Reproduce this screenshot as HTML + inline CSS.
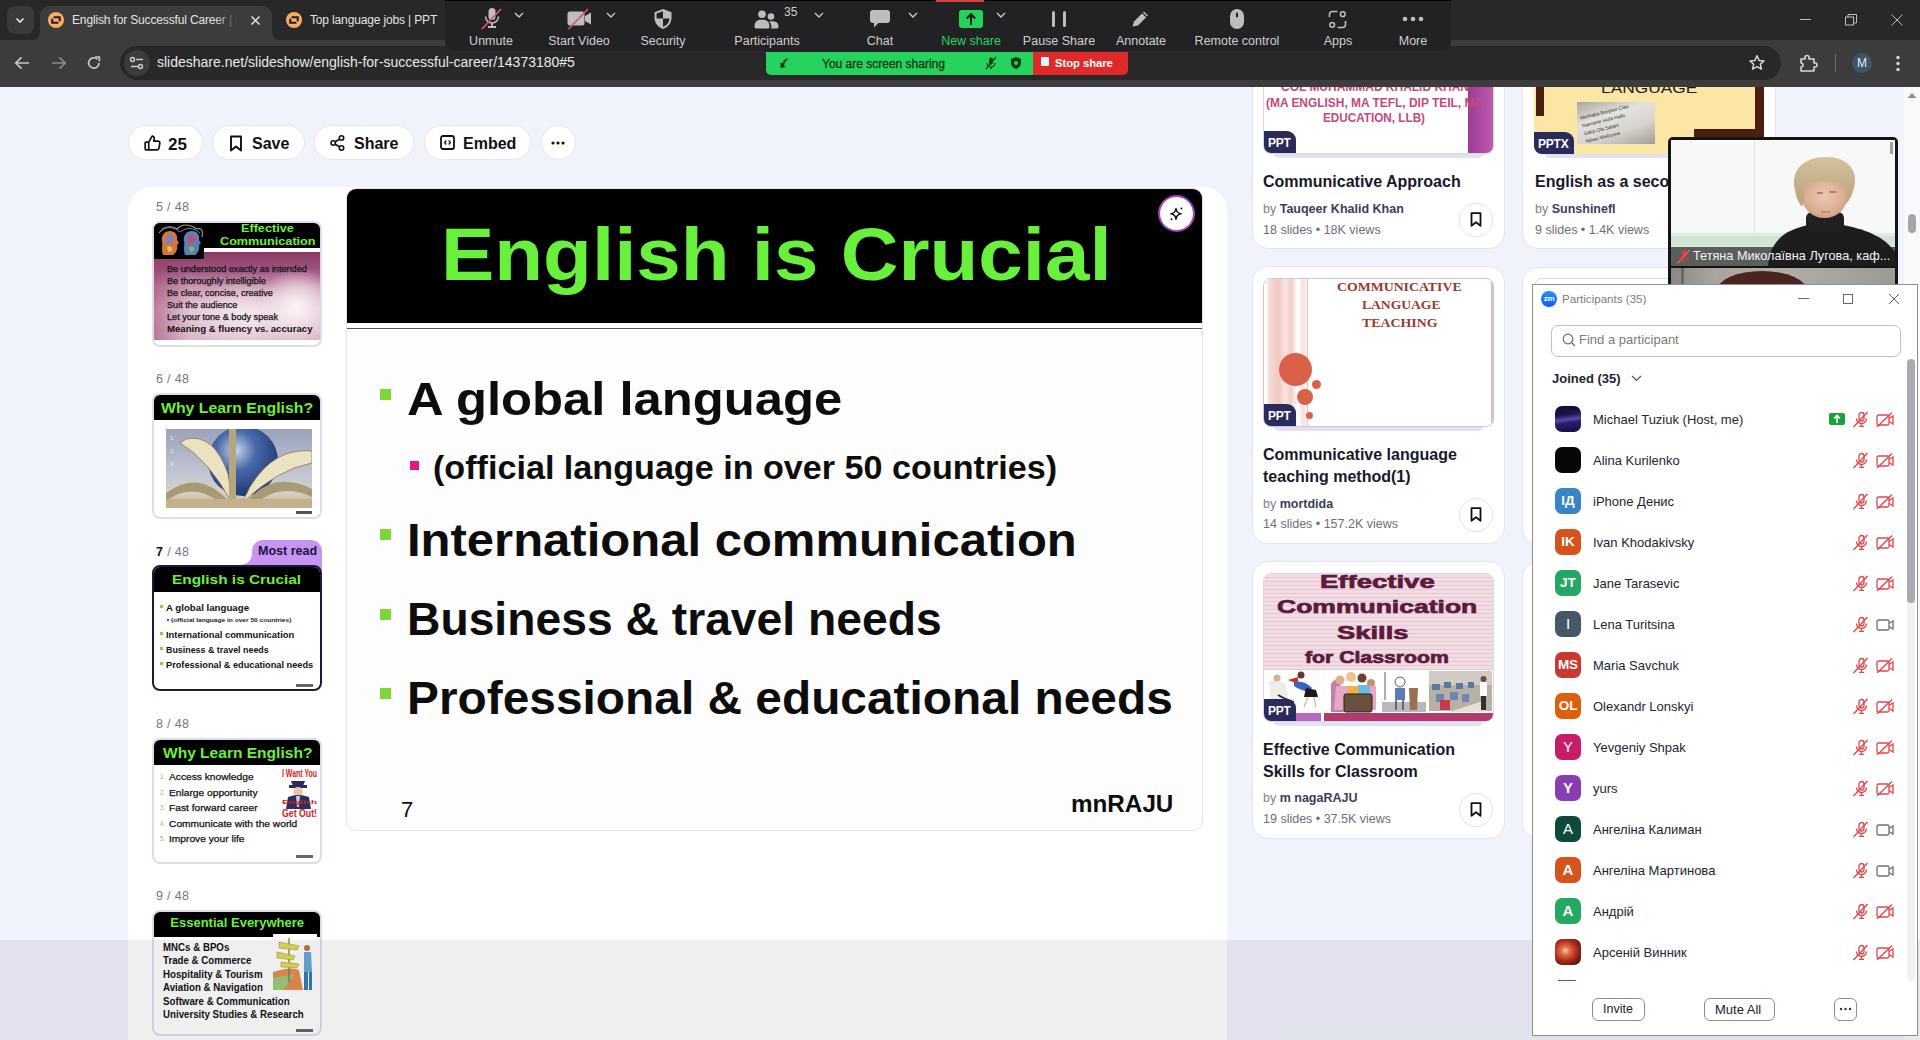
<!DOCTYPE html>
<html><head><meta charset="utf-8">
<style>
*{box-sizing:border-box;margin:0;padding:0}
html,body{width:1920px;height:1040px;overflow:hidden}
body{position:relative;background:#f0f2fc;font-family:"Liberation Sans",sans-serif;color:#111}
.a{position:absolute}
.nw{white-space:nowrap}
svg{display:block}
/* chrome */
#tabstrip{left:0;top:0;width:1920px;height:40px;background:#282828}
#toolbar{left:0;top:40px;width:1920px;height:47px;background:#3c3c3c}
.tab{color:#e3e3e3;font-size:12px;letter-spacing:-0.15px}
/* page */
.pill{top:125px;height:35px;background:#fff;border:1px solid #e6e6ee;border-radius:18px}
.pill span{position:absolute;font-weight:bold;font-size:17px;color:#111;top:7px}
.sl{position:absolute;font-weight:bold;color:#0d0d0d;white-space:nowrap;transform-origin:0 0}
.lbl{font-size:12px;color:#6e6e7e}
.thumb{position:absolute;left:152px;width:170px;height:126px;border:2px solid #dcdcec;border-radius:8px;overflow:hidden;background:#fff}
.card{position:absolute;background:#fff;border:1px solid #e4e5f0;border-radius:16px}
.cthumb{position:absolute;border:1px solid #d8d8e4;border-radius:8px;overflow:hidden;background:#fff}
.badge{position:absolute;left:-1px;bottom:-1px;height:23px;background:#2a2a5c;color:#fff;font-weight:bold;font-size:12px;padding:5px 5px 0 5px;border-top-right-radius:9px;letter-spacing:-0.2px}
.ctitle{position:absolute;font-size:16px;font-weight:bold;color:#18182a;white-space:nowrap;line-height:22px}
.cby{position:absolute;font-size:13px;color:#80808e;white-space:nowrap}
.cby b{color:#3c3c5a}
.cstat{position:absolute;font-size:13px;color:#6e6e7a;white-space:nowrap}
.bm{position:absolute;width:34px;height:34px;border:1px solid #e2e2ec;border-radius:50%;background:#fff}
/* zoom toolbar */
#ztb{left:445px;top:0;width:1006px;height:51px;background:#222224;border-bottom-left-radius:9px;border-bottom-right-radius:9px;border-top:1px solid #000}
.zl{position:absolute;top:34px;font-size:12.5px;color:#cfcfcf;white-space:nowrap;transform:translateX(-50%)}
.zi{position:absolute}
/* participants */
#pw{left:1532px;top:284px;width:386px;height:752px;background:#fff;border:1px solid #8c8c8c}
.prow{position:absolute;left:22px;width:340px;height:41px}
.av{position:absolute;left:0;top:3px;width:26px;height:26px;border-radius:7px;color:#fff;font-weight:bold;font-size:14px;text-align:center;line-height:26px}
.pn{position:absolute;left:39px;top:7px;font-size:13.5px;color:#232333;white-space:nowrap}
</style></head><body>

<!-- action pills -->
<div class="a pill" style="left:128px;width:75px"></div>
<svg class="a" style="left:144px;top:135px" width="17" height="16" viewBox="0 0 18 17"><path d="M5 7.5 V15.8 H2.2 A1 1 0 0 1 1.2 14.8 V8.5 A1 1 0 0 1 2.2 7.5 Z M5 7.5 L8.6 1.2 C10.2 1.2 11 2.3 10.8 3.8 L10.3 6.5 H15 A1.8 1.8 0 0 1 16.8 8.6 L15.8 14.3 A1.8 1.8 0 0 1 14 15.8 H5" fill="none" stroke="#111" stroke-width="1.8" stroke-linejoin="round"/></svg>
<div class="a nw" style="left:168px;top:134.5px;font-size:17px;font-weight:bold;color:#111">25</div>
<div class="a pill" style="left:212px;width:93px"></div>
<svg class="a" style="left:229px;top:135px" width="14" height="17" viewBox="0 0 14 17"><path d="M2 1.5 H12 V15.5 L7 11.5 L2 15.5 Z" fill="none" stroke="#111" stroke-width="1.9" stroke-linejoin="round"/></svg>
<div class="a nw" style="left:252px;top:135px;font-size:16px;font-weight:bold;color:#111">Save</div>
<div class="a pill" style="left:314px;width:100px"></div>
<svg class="a" style="left:330px;top:135px" width="15" height="16" viewBox="0 0 15 16"><circle cx="11.5" cy="3" r="2.2" fill="none" stroke="#111" stroke-width="1.6"/><circle cx="3.2" cy="8" r="2.2" fill="none" stroke="#111" stroke-width="1.6"/><circle cx="11.5" cy="13" r="2.2" fill="none" stroke="#111" stroke-width="1.6"/><path d="M5.2 6.8 L9.5 4.2 M5.2 9.2 L9.5 11.8" stroke="#111" stroke-width="1.6"/></svg>
<div class="a nw" style="left:354px;top:135px;font-size:16px;font-weight:bold;color:#111">Share</div>
<div class="a pill" style="left:424px;width:107px"></div>
<svg class="a" style="left:440px;top:135px" width="15" height="15" viewBox="0 0 15 15"><rect x="1" y="1" width="13" height="13" rx="2" fill="none" stroke="#111" stroke-width="1.8"/><path d="M6.3 5.5 L4.6 7.5 L6.3 9.5 M8.7 5.5 L10.4 7.5 L8.7 9.5" fill="none" stroke="#111" stroke-width="1.3"/></svg>
<div class="a nw" style="left:463px;top:135px;font-size:16px;font-weight:bold;color:#111">Embed</div>
<div class="a pill" style="left:541px;width:35px"></div>
<svg class="a" style="left:551px;top:141px" width="14" height="4" viewBox="0 0 14 4"><circle cx="2" cy="2" r="1.6" fill="#111"/><circle cx="7" cy="2" r="1.6" fill="#111"/><circle cx="12" cy="2" r="1.6" fill="#111"/></svg>

<!-- main white card -->
<div class="a" style="left:128px;top:187px;width:1099px;height:900px;background:#fff;border-radius:24px"></div>


<!-- ===== thumbnails ===== -->
<div class="a nw" style="left:156px;top:200px;font-size:12.5px;color:#757585;letter-spacing:0.35px">5 / 48</div>
<div class="thumb" style="top:221px">
<div class="a" style="left:0;top:0;width:166px;height:25px;background:#000"></div>
<div class="a" style="left:0;top:29px;width:166px;height:88px;background:radial-gradient(ellipse 22% 45% at 86% 62%,#fbf4f7 0,rgba(251,244,247,0) 100%),radial-gradient(ellipse 35% 40% at 55% 72%,#f6e8ef 0,rgba(246,232,239,0) 100%),linear-gradient(90deg,rgba(150,66,106,0.55) 0,rgba(150,66,106,0) 22%),linear-gradient(180deg,#8a3a62 0,#9e5480 20%,#cc98b2 40%,#e4c8d6 65%,#dcb8ca 100%)"></div>
<div class="a" style="left:0;top:0;width:50px;height:36px;background:#000"></div>
<svg class="a" style="left:3px;top:0px" width="48" height="36" viewBox="0 0 48 36"><path d="M6 32 C4 26 6 22 5 18 C4 12 8 8 13 8 C18 8 21 12 20 17 L22 20 L20 22 C21 26 19 30 16 32Z" fill="#d07840"/><path d="M9 14 C12 11 16 12 17 16 C15 20 11 22 9 20Z" fill="#7088c8"/><path d="M10 24 C13 22 16 24 15 28 L11 29Z" fill="#e0c060"/><path d="M28 32 C26 26 28 22 27 18 C26 12 30 8 35 8 C40 8 43 12 42 17 L44 20 L42 22 C43 26 41 30 38 32Z" fill="#5a80b8"/><path d="M31 14 C34 11 38 12 39 16 C37 20 33 22 31 20Z" fill="#c05070"/><path d="M32 24 C35 22 38 24 37 28 L33 29Z" fill="#90b060"/><path d="M2 10 Q10 0 20 6 Q28 -2 40 6 Q47 4 45 14" fill="none" stroke="#b0a060" stroke-width="1.1"/><path d="M5 6 Q16 2 23 9 Q33 1 43 10" fill="none" stroke="#7090d0" stroke-width="0.9"/></svg>
<div class="sl" style="left:87.3px;top:-1.4px;font-size:11px;color:#6cf03c;font-weight:bold;transform:scaleX(1.15);">Effective</div>
<div class="sl" style="left:65.7px;top:11.7px;font-size:11px;color:#6cf03c;font-weight:bold;transform:scaleX(1.15);">Communication</div>
<div class="sl" style="left:12.6px;top:41.3px;font-size:8.4px;color:#141414;font-weight:normal;transform:scaleX(1.088);-webkit-text-stroke:0.25px #141414;">Be understood exactly as intended</div>
<div class="sl" style="left:12.6px;top:53.3px;font-size:8.4px;color:#141414;font-weight:normal;transform:scaleX(1.088);-webkit-text-stroke:0.25px #141414;">Be thoroughly intelligible</div>
<div class="sl" style="left:12.6px;top:65.2px;font-size:8.4px;color:#141414;font-weight:normal;transform:scaleX(1.088);-webkit-text-stroke:0.25px #141414;">Be clear, concise, creative</div>
<div class="sl" style="left:12.6px;top:77.2px;font-size:8.4px;color:#141414;font-weight:normal;transform:scaleX(1.088);-webkit-text-stroke:0.25px #141414;">Suit the audience</div>
<div class="sl" style="left:12.6px;top:89.1px;font-size:8.4px;color:#141414;font-weight:normal;transform:scaleX(1.088);-webkit-text-stroke:0.25px #141414;">Let your tone &amp; body speak</div>
<div class="sl" style="left:13.4px;top:100.5px;font-size:8.6px;color:#111;font-weight:bold;transform:scaleX(1.12);">Meaning &amp; fluency vs. accuracy</div>
</div>
<div class="a nw" style="left:156px;top:372px;font-size:12.5px;color:#757585;letter-spacing:0.35px">6 / 48</div>
<div class="thumb" style="top:393px">
<div class="a" style="left:0;top:0;width:166px;height:25px;background:#000"></div>
<div class="sl" style="left:7.2px;top:5.4px;font-size:14px;color:#6cf03c;font-weight:bold;transform:scaleX(1.13);">Why Learn English?</div>
<svg class="a" style="left:12px;top:34px" width="146" height="79" viewBox="0 0 146 79">
<defs><linearGradient id="t6bg" x1="0" y1="0" x2="0" y2="1"><stop offset="0" stop-color="#9aa2ba"/><stop offset="0.6" stop-color="#c4c8d4"/><stop offset="0.82" stop-color="#d4d0c4"/><stop offset="1" stop-color="#b8a888"/></linearGradient>
<radialGradient id="t6g" cx="0.4" cy="0.35" r="0.7"><stop offset="0" stop-color="#c8d6ec"/><stop offset="0.4" stop-color="#4a6aaa"/><stop offset="1" stop-color="#1a3270"/></radialGradient></defs>
<rect width="146" height="79" fill="url(#t6bg)"/>
<circle cx="77" cy="32" r="35" fill="url(#t6g)"/>
<path d="M0 64 Q35 38 66 76 L60 79 Q30 50 0 72Z" fill="#a89a74"/>
<path d="M146 60 Q105 40 78 76 L86 79 Q110 52 146 68Z" fill="#a89a74"/>
<path d="M20 10 Q48 4 62 45 L66 74 Q42 30 14 14Z" fill="#ece2c2" stroke="#8a7c58" stroke-width="0.8"/>
<path d="M146 22 Q108 18 84 58 L76 74 Q112 40 146 34Z" fill="#ece2c2" stroke="#8a7c58" stroke-width="0.8"/>
<rect x="63" y="0" width="7" height="76" fill="#b4a67e"/>
<rect x="0" y="70" width="146" height="9" fill="#c4b08a"/>
<text x="4" y="11" font-size="6" fill="#e8ecf4" font-family="Liberation Sans">1.</text><text x="4" y="24" font-size="6" fill="#e8ecf4" font-family="Liberation Sans">2.</text><text x="4" y="37" font-size="6" fill="#e8ecf4" font-family="Liberation Sans">3.</text>
</svg>
<div class="a" style="left:142px;top:116px;width:16px;height:3px;background:#555"></div>
</div>
<div class="a nw" style="left:156px;top:545px;font-size:12.5px;color:#757585;letter-spacing:0.35px"><b style="color:#111">7</b> / 48</div>
<svg class="a" style="left:242px;top:540px" width="80" height="30" viewBox="0 0 80 30"><path d="M0 24.5 C6 24 10 20 10 13 L10 11 A11 11 0 0 1 21 0 L69 0 A11 11 0 0 1 80 11 L80 30 L0 30 Z" fill="#c894f2"/></svg>
<div class="a nw" style="left:258px;top:544px;font-size:12.5px;font-weight:bold;color:#17163a">Most read</div>
<div class="thumb" style="top:565px;border-color:#1c1a3a">
<div class="a" style="left:0;top:0;width:166px;height:25px;background:#000"></div>
<div class="sl" style="left:17.7px;top:4.5px;font-size:13.5px;color:#6cf03c;font-weight:bold;transform:scaleX(1.14);">English is Crucial</div>
<div class="a" style="left:6px;top:38px;width:3px;height:3px;background:#7fd63c"></div>
<div class="sl" style="left:12.1px;top:35.2px;font-size:9.5px;color:#111;font-weight:bold;transform:scaleX(1.0196319018404907);">A global language</div>
<div class="a" style="left:6px;top:65px;width:3px;height:3px;background:#7fd63c"></div>
<div class="sl" style="left:12.1px;top:62.1px;font-size:9.5px;color:#111;font-weight:bold;transform:scaleX(0.987682832948422);">International communication</div>
<div class="a" style="left:6px;top:80px;width:3px;height:3px;background:#7fd63c"></div>
<div class="sl" style="left:12.1px;top:77.2px;font-size:9.5px;color:#111;font-weight:bold;transform:scaleX(0.9353369763205829);">Business &amp; travel needs</div>
<div class="a" style="left:6px;top:95px;width:3px;height:3px;background:#7fd63c"></div>
<div class="sl" style="left:12.1px;top:92.3px;font-size:9.5px;color:#111;font-weight:bold;transform:scaleX(0.9677631578947368);">Professional &amp; educational needs</div>
<div class="a" style="left:13px;top:52px;width:2px;height:2px;background:#e3197a"></div>
<div class="sl" style="left:16.7px;top:50.3px;font-size:6px;color:#222;font-weight:bold;transform:scaleX(1.097538742023701);">(official language in over 50 countries)</div>
<div class="a" style="left:142px;top:117px;width:17px;height:3px;background:#666"></div>
</div>
<div class="a nw" style="left:156px;top:717px;font-size:12.5px;color:#757585;letter-spacing:0.35px">8 / 48</div>
<div class="thumb" style="top:738px">
<div class="a" style="left:0;top:0;width:166px;height:25px;background:#000"></div>
<div class="sl" style="left:8.5px;top:5.4px;font-size:14px;color:#6cf03c;font-weight:bold;transform:scaleX(1.11);">Why Learn English?</div>
<div class="sl" style="left:5.8px;top:33.4px;font-size:7px;color:#8ccc5c;font-weight:normal;">1.</div>
<div class="sl" style="left:15.2px;top:31.1px;font-size:9.5px;color:#111;font-weight:normal;transform:scaleX(1.075);-webkit-text-stroke:0.25px #111;">Access knowledge</div>
<div class="sl" style="left:5.8px;top:48.9px;font-size:7px;color:#8ccc5c;font-weight:normal;">2.</div>
<div class="sl" style="left:15.2px;top:46.6px;font-size:9.5px;color:#111;font-weight:normal;transform:scaleX(1.075);-webkit-text-stroke:0.25px #111;">Enlarge opportunity</div>
<div class="sl" style="left:5.8px;top:64.4px;font-size:7px;color:#8ccc5c;font-weight:normal;">3.</div>
<div class="sl" style="left:15.2px;top:62.1px;font-size:9.5px;color:#111;font-weight:normal;transform:scaleX(1.075);-webkit-text-stroke:0.25px #111;">Fast forward career</div>
<div class="sl" style="left:5.8px;top:79.9px;font-size:7px;color:#8ccc5c;font-weight:normal;">4.</div>
<div class="sl" style="left:15.2px;top:77.6px;font-size:9.5px;color:#111;font-weight:normal;transform:scaleX(1.075);-webkit-text-stroke:0.25px #111;">Communicate with the world</div>
<div class="sl" style="left:5.8px;top:95.4px;font-size:7px;color:#8ccc5c;font-weight:normal;">5.</div>
<div class="sl" style="left:15.2px;top:93.1px;font-size:9.5px;color:#111;font-weight:normal;transform:scaleX(1.075);-webkit-text-stroke:0.25px #111;">Improve your life</div>
<svg class="a" style="left:127px;top:27px" width="37" height="51" viewBox="0 0 37 51">
<text x="1" y="10" font-size="10" font-weight="bold" fill="#d42020" font-family="Liberation Sans" textLength="35" lengthAdjust="spacingAndGlyphs">I Want You</text>
<path d="M10 14 H24 L22 19 H12Z" fill="#2a2a58"/><rect x="8" y="18" width="18" height="3" fill="#2a2a58"/>
<ellipse cx="17" cy="25" rx="5" ry="5" fill="#e8c8a8"/>
<path d="M7 30 Q17 26 28 30 L30 42 H5Z" fill="#283060"/>
<path d="M15 29 L19 29 L18 40 L16 40Z" fill="#d0d0d0"/>
<text x="1" y="37" font-size="6" font-weight="bold" fill="#c82020" font-family="Liberation Sans" textLength="35" lengthAdjust="spacingAndGlyphs">English</text>
<text x="1" y="50" font-size="11" font-weight="bold" fill="#d42020" font-family="Liberation Sans" textLength="35" lengthAdjust="spacingAndGlyphs">Get Out!</text>
</svg>
<div class="a" style="left:142px;top:115px;width:17px;height:3px;background:#666"></div>
</div>
<div class="a nw" style="left:156px;top:889px;font-size:12.5px;color:#757585;letter-spacing:0.35px">9 / 48</div>
<div class="thumb" style="top:910px">
<div class="a" style="left:0;top:0;width:166px;height:25px;background:#000"></div>
<div class="sl" style="left:16.3px;top:3.0px;font-size:13px;color:#6cf03c;font-weight:bold;">Essential Everywhere</div>
<div class="sl" style="left:8.5px;top:29.7px;font-size:10px;color:#111;font-weight:bold;transform:scaleX(0.97);">MNCs &amp; BPOs</div>
<div class="sl" style="left:8.5px;top:43.2px;font-size:10px;color:#111;font-weight:bold;transform:scaleX(0.97);">Trade &amp; Commerce</div>
<div class="sl" style="left:8.5px;top:56.8px;font-size:10px;color:#111;font-weight:bold;transform:scaleX(0.97);">Hospitality &amp; Tourism</div>
<div class="sl" style="left:8.5px;top:70.3px;font-size:10px;color:#111;font-weight:bold;transform:scaleX(0.97);">Aviation &amp; Navigation</div>
<div class="sl" style="left:8.5px;top:83.9px;font-size:10px;color:#111;font-weight:bold;transform:scaleX(0.97);">Software &amp; Communication</div>
<div class="sl" style="left:8.5px;top:97.4px;font-size:10px;color:#111;font-weight:bold;transform:scaleX(0.97);">University Studies &amp; Research</div>
<svg class="a" style="left:119px;top:22px" width="44" height="56" viewBox="0 0 44 56">
<rect width="44" height="56" fill="#fff"/>
<path d="M0 38 Q18 32 26 36 L30 56 H0Z" fill="#e88c54"/>
<path d="M0 44 L22 40 L10 56 H0Z" fill="#9ccc7c"/>
<path d="M16 4 L16 48" stroke="#6a7a40" stroke-width="1.2"/>
<path d="M6 8 L26 12 L24 16 L6 14Z M4 18 L22 22 L20 26 L4 24Z M8 28 L26 30 L24 34 L8 33Z" fill="#e8dc50" stroke="#8a8a30" stroke-width="0.5"/>
<circle cx="34" cy="14" r="3" fill="#c87040"/>
<path d="M31 18 H38 L39 38 H31Z" fill="#6aa8d8"/>
<path d="M31 38 H35 L35 56 H31Z M36 38 H39 L39 56 H36Z" fill="#3a7ab8"/>
</svg>
<div class="a" style="left:142px;top:117px;width:17px;height:3px;background:#666"></div>
</div>
<!-- main slide -->
<div class="a" style="left:346px;top:188px;width:857px;height:643px;background:#fdfdfd;border:1px solid #e3e3ee;border-radius:10px;overflow:hidden">
  <div class="a" style="left:0;top:0;width:857px;height:134px;background:#000"></div>
  <div class="a" style="left:0;top:139px;width:857px;height:1px;background:#555"></div>
</div>
<div class="sl" style="left:441px;top:212px;font-size:74px;color:#69f03c;transform:scaleX(1.08)">English is Crucial</div>
<div class="a" style="left:1158px;top:195px;width:37px;height:37px;border-radius:50%;background:linear-gradient(135deg,#e0407a,#7a3ce0 50%,#d94090)"></div>
<div class="a" style="left:1160px;top:197px;width:33px;height:33px;border-radius:50%;background:#fff"></div>
<svg class="a" style="left:1168px;top:205px" width="18" height="18" viewBox="0 0 18 18"><path d="M8 3.5 C8.4 7 9.5 8.3 13 8.8 C9.5 9.3 8.4 10.6 8 14.2 C7.6 10.6 6.5 9.3 3 8.8 C6.5 8.3 7.6 7 8 3.5Z" fill="none" stroke="#111" stroke-width="1.5" stroke-linejoin="round"/><circle cx="13.5" cy="3.5" r="1" fill="#111"/><circle cx="3.5" cy="14.3" r="1" fill="#111"/></svg>
<div class="a" style="left:380px;top:389px;width:11px;height:11px;background:#7fd63c"></div>
<div class="sl" style="left:407px;top:371px;font-size:47px;transform:scaleX(1.08)">A global language</div>
<div class="a" style="left:410px;top:461px;width:9px;height:9px;background:#e3197a"></div>
<div class="sl" style="left:433px;top:448px;font-size:34px;transform:scaleX(1.004)">(official language in over 50 countries)</div>
<div class="a" style="left:380px;top:529px;width:11px;height:11px;background:#7fd63c"></div>
<div class="sl" style="left:407px;top:512px;font-size:47px;transform:scaleX(1.0426)">International communication</div>
<div class="a" style="left:380px;top:609px;width:11px;height:11px;background:#7fd63c"></div>
<div class="sl" style="left:407px;top:591px;font-size:47px;transform:scaleX(0.984)">Business &amp; travel needs</div>
<div class="a" style="left:380px;top:688px;width:11px;height:11px;background:#7fd63c"></div>
<div class="sl" style="left:407px;top:670px;font-size:47px;transform:scaleX(1.018)">Professional &amp; educational needs</div>
<div class="sl" style="left:401px;top:797px;font-size:22px;font-weight:normal">7</div>
<div class="sl" style="left:1071px;top:791px;font-size:23px;transform:scaleX(1.054)">mnRAJU</div>



<!-- ===== right cards ===== -->
<!-- col1 card1 -->
<div class="card" style="left:1252px;top:-8px;width:253px;height:257px"></div>
<div class="a" style="left:1272px;top:148px;width:213px;height:10px;background:#e0e1f2;border-radius:0 0 8px 8px"></div>
<div class="cthumb" style="left:1263px;top:4px;width:231px;height:150px">
  <div class="a" style="left:204px;top:0;width:26px;height:150px;background:linear-gradient(90deg,#9c3c94,#c058b0)"></div>
  <div class="sl" style="left:17.0px;top:74.1px;font-size:12.9px;color:#c24a7c;font-weight:bold;transform:scaleX(0.9288);">COL MUHAMMAD KHALID KHAN</div>
<div class="sl" style="left:2.0px;top:89.8px;font-size:12.9px;color:#c24a7c;font-weight:bold;transform:scaleX(0.9257);">(MA ENGLISH, MA TEFL, DIP TEIL, MA</div>
<div class="sl" style="left:59.0px;top:105.1px;font-size:12.9px;color:#c24a7c;font-weight:bold;transform:scaleX(0.9092);">EDUCATION, LLB)</div>
  <div class="badge">PPT</div>
</div>
<div class="ctitle" style="left:1263px;top:171px">Communicative Approach</div>
<div class="cby" style="left:1263px;top:202px;font-size:12.5px">by <b>Tauqeer Khalid Khan</b></div>
<div class="cstat" style="left:1263px;top:223px;font-size:12.5px">18 slides • 18K views</div>
<div class="bm" style="left:1459px;top:203px"></div>
<svg class="a" style="left:1470px;top:212px" width="12" height="15" viewBox="0 0 12 15"><path d="M1.5 1.2 H10.5 V13.8 L6 10.3 L1.5 13.8 Z" fill="none" stroke="#111" stroke-width="1.8" stroke-linejoin="round"/></svg>

<!-- col1 card2 -->
<div class="card" style="left:1252px;top:266px;width:253px;height:278px"></div>
<div class="a" style="left:1272px;top:421px;width:213px;height:10px;background:#e0e1f2;border-radius:0 0 8px 8px"></div>
<div class="cthumb" style="left:1263px;top:278px;width:231px;height:149px;border-color:#c8c8d8">
  <div class="a" style="left:2px;top:0;width:42px;height:149px;background:linear-gradient(90deg,#fff 0,#f6dcd8 8%,#f0c8c0 30%,#f8e4e0 45%,#f2d0c8 60%,#fff 75%,#f8e0dc 90%,#fff)"></div>
  <div class="a" style="left:43px;top:0;width:1px;height:149px;background:#e8c0b8"></div>
  <div class="a" style="left:227px;top:0;width:2px;height:149px;background:#e0b8b8"></div>
  <div class="a" style="left:15px;top:74px;width:33px;height:33px;border-radius:50%;background:#d9614a"></div>
  <div class="a" style="left:48px;top:101px;width:9px;height:9px;border-radius:50%;background:#d9614a"></div>
  <div class="a" style="left:33px;top:110px;width:16px;height:16px;border-radius:50%;background:#d9614a"></div>
  <div class="a" style="left:42px;top:133px;width:7px;height:7px;border-radius:50%;background:#d9614a"></div>
  <div class="sl" style="left:72.8px;top:0.4px;font-size:13.3px;color:#9a3a2c;font-weight:bold;transform:scaleX(1.0368);font-family:'Liberation Serif',serif;">COMMUNICATIVE</div>
<div class="sl" style="left:97.5px;top:18.3px;font-size:13.3px;color:#9a3a2c;font-weight:bold;transform:scaleX(1.0216);font-family:'Liberation Serif',serif;">LANGUAGE</div>
<div class="sl" style="left:97.5px;top:35.5px;font-size:13.3px;color:#9a3a2c;font-weight:bold;transform:scaleX(1.0427);font-family:'Liberation Serif',serif;">TEACHING</div>
  <div class="badge">PPT</div>
</div>
<div class="ctitle" style="left:1263px;top:444px">Communicative language<br>teaching method(1)</div>
<div class="cby" style="left:1263px;top:497px;font-size:12.5px">by <b>mortdida</b></div>
<div class="cstat" style="left:1263px;top:517px;font-size:12.5px">14 slides • 157.2K views</div>
<div class="bm" style="left:1459px;top:498px"></div>
<svg class="a" style="left:1470px;top:507px" width="12" height="15" viewBox="0 0 12 15"><path d="M1.5 1.2 H10.5 V13.8 L6 10.3 L1.5 13.8 Z" fill="none" stroke="#111" stroke-width="1.8" stroke-linejoin="round"/></svg>

<!-- col1 card3 -->
<div class="card" style="left:1252px;top:561px;width:253px;height:278px"></div>
<div class="a" style="left:1272px;top:716px;width:213px;height:10px;background:#e0e1f2;border-radius:0 0 8px 8px"></div>
<div class="cthumb" style="left:1263px;top:573px;width:231px;height:149px">
  <div class="a" style="left:0;top:0;width:231px;height:100px;background:repeating-linear-gradient(180deg,#f2dde4 0,#f2dde4 3px,#e6c8d2 3px,#e6c8d2 4px)"></div>
  <div class="sl" style="left:55.8px;top:-3.1px;font-size:18.6px;color:#5e1a3c;font-weight:bold;transform:scaleX(1.4797);-webkit-text-stroke:0.7px #5e1a3c;">Effective</div>
<div class="sl" style="left:12.6px;top:22.4px;font-size:18.6px;color:#5e1a3c;font-weight:bold;transform:scaleX(1.4256);-webkit-text-stroke:0.7px #5e1a3c;">Communication</div>
<div class="sl" style="left:72.8px;top:47.7px;font-size:18.6px;color:#5e1a3c;font-weight:bold;transform:scaleX(1.4714);-webkit-text-stroke:0.7px #5e1a3c;">Skills</div>
<div class="sl" style="left:41.0px;top:73.5px;font-size:16.4px;color:#5e1a3c;font-weight:bold;transform:scaleX(1.2940);-webkit-text-stroke:0.7px #5e1a3c;">for Classroom</div>
<div class="a" style="left:0;top:96px;width:231px;height:43px;background:#fff"></div>
  <svg class="a" style="left:0;top:96px" width="231" height="43" viewBox="0 0 231 43">
<rect x="0" y="0" width="231" height="43" fill="#fff"/>
<rect x="2" y="1" width="60" height="41" fill="#fdfdfd"/>
<circle cx="13" cy="8" r="3.5" fill="#d8b090"/><path d="M6 12 Q13 10 20 14 L24 30 Q14 34 8 30Z" fill="#f0eeea" stroke="#ccc" stroke-width="0.4"/>
<path d="M14 25 Q22 30 30 32" stroke="#222" stroke-width="1.5" fill="none"/>
<path d="M24 10 L34 7 L34 14Z" fill="#d82828"/>
<circle cx="37" cy="5" r="3.5" fill="#5a3a2a"/>
<path d="M30 12 Q40 10 48 18 L45 22 Q36 20 30 16Z" fill="#3a62c0"/>
<path d="M42 18 L52 20 L54 27 L40 27Z" fill="#1a1a1a"/>
<path d="M44 27 L40 37 M50 27 L52 37" stroke="#d8b090" stroke-width="1.2"/>
<rect x="65" y="1" width="50" height="41" fill="#fff"/>
<path d="M67 14 Q70 8 76 10 L80 42 H67Z" fill="#c080a8"/>
<circle cx="76" cy="10" r="4.5" fill="#e0b088"/><circle cx="87" cy="7" r="5" fill="#f0c090"/><circle cx="98" cy="8" r="4.5" fill="#6a4030"/><circle cx="107" cy="13" r="4" fill="#c89070"/>
<path d="M72 16 H112 V40 H70Z" fill="#e8a8c8"/>
<path d="M84 16 H94 V26 H84Z" fill="#f0b040"/><path d="M94 15 H106 V30 H94Z" fill="#70b8e0"/>
<rect x="80" y="24" width="28" height="18" rx="2" fill="#6a5040" stroke="#2a2018" stroke-width="1"/>
<rect x="117" y="1" width="46" height="41" fill="#fff"/>
<path d="M118 32 L162 32 L162 42 L118 42Z" fill="#b8b8c0"/>
<circle cx="136" cy="12" r="5" fill="#fff" stroke="#333" stroke-width="0.8"/>
<path d="M131 18 H141 V30 H131Z" fill="#5a7ab8"/><path d="M132 30 V40 M139 30 V40" stroke="#555" stroke-width="1.6"/>
<path d="M145 18 H154 L153 40 H146Z" fill="#9a7050"/>
<path d="M121 2 V30" stroke="#333" stroke-width="0.8"/>
<rect x="165" y="1" width="63" height="40" fill="#b8b0a4"/>
<rect x="165" y="1" width="63" height="14" fill="#d0ccc4"/>
<path d="M168 14 h8 v6 h-8z M180 12 h7 v6 h-7z M192 13 h7 v6 h-7z M204 12 h6 v6 h-6z" fill="#5a78a0"/>
<path d="M172 24 h8 v8 h-8z M186 22 h8 v8 h-8z M198 24 h7 v8 h-7z" fill="#6a88b0"/>
<path d="M176 30 h10 v10 h-10z" fill="#c83a48"/>
<path d="M185 42 L222 30 L222 42Z" fill="#e8e0d0"/>
<rect x="216" y="12" width="7" height="14" fill="#fafafa"/><rect x="217" y="26" width="5" height="14" fill="#303030"/><circle cx="219.5" cy="9" r="3" fill="#6a4a3a"/>
</svg>
<div class="a" style="left:0;top:139px;width:231px;height:10px;background:#fff"></div>
  <div class="a" style="left:30px;top:139px;width:27px;height:10px;background:#b868c0"></div>
  <div class="a" style="left:60px;top:139px;width:171px;height:10px;background:#b33a6c"></div>
  <div class="badge">PPT</div>
</div>
<div class="ctitle" style="left:1263px;top:739px">Effective Communication<br>Skills for Classroom</div>
<div class="cby" style="left:1263px;top:791px;font-size:12.5px">by <b>m nagaRAJU</b></div>
<div class="cstat" style="left:1263px;top:812px;font-size:12.5px">19 slides • 37.5K views</div>
<div class="bm" style="left:1459px;top:793px"></div>
<svg class="a" style="left:1470px;top:802px" width="12" height="15" viewBox="0 0 12 15"><path d="M1.5 1.2 H10.5 V13.8 L6 10.3 L1.5 13.8 Z" fill="none" stroke="#111" stroke-width="1.8" stroke-linejoin="round"/></svg>

<!-- col2 card1 -->
<div class="card" style="left:1522px;top:-8px;width:254px;height:257px"></div>
<div class="a" style="left:1543px;top:148px;width:213px;height:10px;background:#e0e1f2;border-radius:0 0 8px 8px"></div>
<div class="cthumb" style="left:1534px;top:4px;width:230px;height:150px;background:#fbe6a6;border:none">
  <div class="a" style="left:2px;top:0;width:8px;height:112px;background:#4c1e12"></div>
  <div class="a" style="left:221px;top:0;width:10px;height:150px;background:#4c1e12"></div>
  <div class="a" style="left:160px;top:125px;width:71px;height:25px;background:#4c1e12"></div>
  <div class="sl" style="left:66.6px;top:75.2px;font-size:15px;color:#2a1a10;font-weight:normal;transform:scaleX(1.1564);">LANGUAGE</div>
  <div class="a" style="left:43px;top:98px;width:78px;height:42px;overflow:hidden;background:linear-gradient(160deg,#a8a4a0,#e4e2de 35%,#d8d4d0 65%,#a09c98)"><div class="a" style="left:2px;top:12px;font-size:5px;line-height:8px;color:#333;white-space:nowrap;transform:rotate(-14deg);transform-origin:0 0">Merhaba  Bonjour   Ciao<br>  Namaste  Hola   Hallo<br>Salut  Ola  Salam<br>  Nihao   Welcome</div></div>
  <div class="badge" style="padding-left:5px">PPTX</div>
</div>
<div class="ctitle" style="left:1535px;top:171px">English as a second language</div>
<div class="cby" style="left:1535px;top:202px;font-size:12.5px">by <b>Sunshinefl</b></div>
<div class="cstat" style="left:1535px;top:223px;font-size:12.5px">9 slides • 1.4K views</div>
<!-- col2 card2 -->
<div class="card" style="left:1522px;top:267px;width:254px;height:278px"></div>
<div class="cthumb" style="left:1534px;top:278px;width:230px;height:149px"></div>
<div class="card" style="left:1522px;top:561px;width:254px;height:278px"></div>

<!-- page scrollbar -->
<div class="a" style="left:1904px;top:86px;width:16px;height:954px;background:#f9f9fb"></div>
<svg class="a" style="left:1907px;top:92px" width="10" height="7" viewBox="0 0 10 7"><path d="M0.5 6 L5 1 L9.5 6 Z" fill="#8e8e8e"/></svg>
<div class="a" style="left:1908px;top:214px;width:8px;height:19px;border-radius:4px;background:#a6a6a6"></div>

<!-- bottom overlay -->
<div class="a" style="left:0;top:940px;width:1920px;height:100px;background:rgba(0,0,20,0.063)"></div>

<!-- ============ CHROME ============ -->
<div id="tabstrip" class="a"></div>
<div id="toolbar" class="a"></div>
<!-- tab search btn -->
<!-- active tab -->
<div class="a" style="left:40px;top:6px;width:232px;height:40px;background:#3c3c3c;border-radius:9px 9px 0 0"></div>
<div class="a" style="left:32px;top:32px;width:8px;height:8px;background:#3c3c3c"></div>
<div class="a" style="left:24px;top:24px;width:16px;height:16px;background:#282828;border-radius:0 0 8px 0"></div>
<div class="a" style="left:272px;top:32px;width:8px;height:8px;background:#3c3c3c"></div>
<div class="a" style="left:272px;top:24px;width:16px;height:16px;background:#282828;border-radius:0 0 0 8px"></div>
<svg class="a" style="left:48px;top:12px" width="16" height="16" viewBox="0 0 16 16"><circle cx="8" cy="8" r="8" fill="#f7ad5c"/><path d="M6.6 5.25 H11.75 V8.2 M9.4 10.75 H4.25 V7.8" fill="none" stroke="#20183a" stroke-width="2.1" stroke-linecap="square"/></svg>
<div class="a tab nw" style="left:72px;top:13px;width:168px;overflow:hidden">English for Successful Career | P</div>
<div class="a" style="left:215px;top:8px;width:28px;height:26px;background:linear-gradient(90deg,rgba(60,60,60,0),#3c3c3c 80%)"></div>
<svg class="a" style="left:250px;top:15px" width="11" height="11" viewBox="0 0 11 11"><path d="M1.5 1.5 L9.5 9.5 M9.5 1.5 L1.5 9.5" stroke="#e3e3e3" stroke-width="1.5"/></svg>
<div class="a" style="left:7px;top:6px;width:27px;height:28px;border-radius:8px;background:#3a3a3a"></div>
<svg class="a" style="left:14px;top:14px" width="12" height="12" viewBox="0 0 12 12"><path d="M2.5 4.5 L6 8 L9.5 4.5" fill="none" stroke="#e8e8e8" stroke-width="1.6"/></svg>
<!-- tab 2 -->
<svg class="a" style="left:286px;top:12px" width="16" height="16" viewBox="0 0 16 16"><circle cx="8" cy="8" r="8" fill="#f7ad5c"/><path d="M6.6 5.25 H11.75 V8.2 M9.4 10.75 H4.25 V7.8" fill="none" stroke="#20183a" stroke-width="2.1" stroke-linecap="square"/></svg>
<div class="a tab nw" style="left:310px;top:13px">Top language jobs | PPT</div>
<!-- window controls -->
<div class="a" style="left:1800px;top:19px;width:11px;height:1px;background:#bdbdbd"></div>
<svg class="a" style="left:1845px;top:14px" width="12" height="12" viewBox="0 0 12 12"><rect x="0.5" y="3" width="8" height="8" fill="none" stroke="#bdbdbd"/><path d="M3 3 V0.5 H11.5 V9 H8.5" fill="none" stroke="#bdbdbd"/></svg>
<svg class="a" style="left:1891px;top:14px" width="12" height="12" viewBox="0 0 12 12"><path d="M0.5 0.5 L11.5 11.5 M11.5 0.5 L0.5 11.5" stroke="#bdbdbd" stroke-width="1"/></svg>
<!-- nav -->
<svg class="a" style="left:14px;top:56px" width="16" height="14" viewBox="0 0 16 14"><path d="M15 7 H2 M7.5 1.3 L1.8 7 L7.5 12.7" fill="none" stroke="#c7c7c7" stroke-width="1.7"/></svg>
<svg class="a" style="left:51px;top:56px" width="16" height="14" viewBox="0 0 16 14"><path d="M1 7 H14 M8.5 1.3 L14.2 7 L8.5 12.7" fill="none" stroke="#8a8a8a" stroke-width="1.7"/></svg>
<svg class="a" style="left:87px;top:56px" width="14" height="14" viewBox="0 0 14 14"><path d="M12 7 A5.2 5.2 0 1 1 10.3 3.1" fill="none" stroke="#c7c7c7" stroke-width="1.7"/><path d="M8 1 H12.3 V5.3" fill="none" stroke="#c7c7c7" stroke-width="1.7"/></svg>
<!-- omnibox -->
<div class="a" style="left:120px;top:46px;width:1661px;height:34px;border-radius:17px;background:#282828"></div>
<div class="a" style="left:124px;top:50px;width:26px;height:26px;border-radius:13px;background:#3c3c3c"></div>
<svg class="a" style="left:129px;top:56px" width="16" height="14" viewBox="0 0 16 14"><circle cx="3.5" cy="3.5" r="2" fill="none" stroke="#d0d0d0" stroke-width="1.4"/><path d="M7 3.5 H14" stroke="#d0d0d0" stroke-width="1.4"/><circle cx="11.5" cy="10.5" r="2" fill="none" stroke="#d0d0d0" stroke-width="1.4"/><path d="M2 10.5 H9" stroke="#d0d0d0" stroke-width="1.4"/></svg>
<div class="a nw" style="left:157px;top:54px;font-size:14px;color:#e8e8e8">slideshare.net/slideshow/english-for-successful-career/14373180#5</div>
<svg class="a" style="left:1748px;top:54px" width="18" height="18" viewBox="0 0 18 18"><path d="M9 1.8 L11.1 6.4 L16 6.9 L12.3 10.2 L13.4 15.2 L9 12.6 L4.6 15.2 L5.7 10.2 L2 6.9 L6.9 6.4 Z" fill="none" stroke="#d7d7d7" stroke-width="1.5" stroke-linejoin="round"/></svg>
<svg class="a" style="left:1799px;top:53px" width="20" height="20" viewBox="0 0 20 20"><path d="M2 6 H6 V4.5 A2 2 0 0 1 10 4.5 V6 H15 V10 H16 A2 2 0 0 1 16 14 H15 V18 H2 V14 A2 2 0 0 0 2 10 Z" fill="none" stroke="#d7d7d7" stroke-width="1.6" stroke-linejoin="round"/></svg>
<div class="a" style="left:1835px;top:54px;width:1px;height:18px;background:#6a6a6a"></div>
<div class="a" style="left:1852px;top:53px;width:20px;height:20px;border-radius:10px;background:#3e5567;color:#e8eef3;font-size:12px;text-align:center;line-height:20px">M</div>
<svg class="a" style="left:1895px;top:55px" width="6" height="17" viewBox="0 0 6 17"><circle cx="3" cy="2.5" r="1.7" fill="#d7d7d7"/><circle cx="3" cy="8.5" r="1.7" fill="#d7d7d7"/><circle cx="3" cy="14.5" r="1.7" fill="#d7d7d7"/></svg>

<!-- ============ PAGE ============ -->
<div id="page" class="a" style="left:0;top:86px;width:1920px;height:954px;overflow:hidden"></div>

<!-- ============ ZOOM TOOLBAR ============ -->
<div id="ztb" class="a"></div>
<div class="a" style="left:445px;top:0;width:395px;height:1px;background:#000"></div>
<div class="a" style="left:936px;top:0;width:48px;height:2px;background:#d9403a"></div>
<!-- unmute -->
<svg class="zi" style="left:479px;top:6px" width="26" height="24" viewBox="0 0 26 24"><rect x="9.5" y="2" width="7" height="12" rx="3.5" fill="#bdbdbd"/><path d="M6.5 10.5 A6.5 6.5 0 0 0 19.5 10.5" fill="none" stroke="#bdbdbd" stroke-width="1.6"/><path d="M13 17 V20.5 M9 21 H17" stroke="#bdbdbd" stroke-width="1.8"/><path d="M3 23 L22 3" stroke="#e0545a" stroke-width="1.7"/></svg>
<svg class="zi" style="left:514px;top:12px" width="10" height="7" viewBox="0 0 10 7"><path d="M1 1 L5 5 L9 1" fill="none" stroke="#c8c8c8" stroke-width="1.4"/></svg>
<div class="zl" style="left:491px">Unmute</div>
<!-- start video -->
<svg class="zi" style="left:565px;top:6px" width="30" height="24" viewBox="0 0 30 24"><rect x="2.5" y="5.5" width="17" height="14" rx="2.5" fill="#bdbdbd"/><path d="M20 10 L26 6.5 V18.5 L20 15 Z" fill="#bdbdbd"/><path d="M3.5 23 L23 3" stroke="#e0545a" stroke-width="1.7"/></svg>
<svg class="zi" style="left:606px;top:12px" width="10" height="7" viewBox="0 0 10 7"><path d="M1 1 L5 5 L9 1" fill="none" stroke="#c8c8c8" stroke-width="1.4"/></svg>
<div class="zl" style="left:579px">Start Video</div>
<!-- security -->
<svg class="zi" style="left:653px;top:8px" width="20" height="22" viewBox="0 0 20 22"><path d="M10 1 L18.5 4.2 V10 C18.5 15 15 19 10 21 C5 19 1.5 15 1.5 10 V4.2 Z" fill="#bdbdbd"/><path d="M10 3.3 V10.5 H16.4 C16.2 14.4 13.6 17.6 10 18.9 V10.5 H3.6 V5.6 Z" fill="#222224"/></svg>
<div class="zl" style="left:663px">Security</div>
<!-- participants -->
<svg class="zi" style="left:754px;top:10px" width="26" height="19" viewBox="0 0 26 19"><circle cx="8" cy="4.2" r="3.8" fill="#bdbdbd"/><path d="M0.5 17 C0.5 11.5 3.5 9.8 8 9.8 C12.5 9.8 15.5 11.5 15.5 17 C15.5 18.5 14.5 18.5 13 18.5 H3 C1.5 18.5 0.5 18.5 0.5 17Z" fill="#bdbdbd"/><circle cx="17" cy="6.5" r="3.3" fill="#bdbdbd"/><path d="M16 18.5 C17.5 18.5 17.8 17.5 17.3 15.5 C16.9 13.8 16.2 12.5 15.2 11.6 C16 11.3 16.8 11.2 17.6 11.2 C21.5 11.2 24.5 12.3 24.5 16.6 C24.5 18.5 23.5 18.5 22.5 18.5Z" fill="#bdbdbd"/></svg>
<div class="a nw" style="left:784px;top:5px;font-size:12px;color:#cfcfcf">35</div>
<svg class="zi" style="left:814px;top:12px" width="10" height="7" viewBox="0 0 10 7"><path d="M1 1 L5 5 L9 1" fill="none" stroke="#c8c8c8" stroke-width="1.4"/></svg>
<div class="zl" style="left:767px">Participants</div>
<!-- chat -->
<svg class="zi" style="left:869px;top:9px" width="22" height="20" viewBox="0 0 22 20"><path d="M4 1 H18 A3 3 0 0 1 21 4 V11 A3 3 0 0 1 18 14 H9.5 L5 18.5 V14 H4 A3 3 0 0 1 1 11 V4 A3 3 0 0 1 4 1Z" fill="#bdbdbd"/></svg>
<svg class="zi" style="left:908px;top:12px" width="10" height="7" viewBox="0 0 10 7"><path d="M1 1 L5 5 L9 1" fill="none" stroke="#c8c8c8" stroke-width="1.4"/></svg>
<div class="zl" style="left:880px">Chat</div>
<!-- new share -->
<div class="zi" style="left:959px;top:10px;width:24px;height:18px;border-radius:3px;background:#23d45a"></div>
<svg class="zi" style="left:965px;top:12px" width="12" height="14" viewBox="0 0 12 14"><path d="M6 13 V2.5 M1.8 6.5 L6 2.2 L10.2 6.5" fill="none" stroke="#111" stroke-width="1.9"/></svg>
<svg class="zi" style="left:996px;top:12px" width="10" height="7" viewBox="0 0 10 7"><path d="M1 1 L5 5 L9 1" fill="none" stroke="#c8c8c8" stroke-width="1.4"/></svg>
<div class="zl" style="left:971px;color:#23d45a">New share</div>
<!-- pause share -->
<div class="zi" style="left:1052px;top:11px;width:3px;height:16px;border-radius:2px;background:#bdbdbd"></div>
<div class="zi" style="left:1063px;top:11px;width:3px;height:16px;border-radius:2px;background:#bdbdbd"></div>
<div class="zl" style="left:1059px">Pause Share</div>
<!-- annotate -->
<svg class="zi" style="left:1131px;top:9px" width="20" height="20" viewBox="0 0 20 20"><path d="M1.5 17.5 L3 12.5 L13 2.5 L17 6.5 L7 16.5 Z" fill="#bdbdbd"/><path d="M11.6 4 L15.6 8" stroke="#222224" stroke-width="1.2"/></svg>
<div class="zl" style="left:1141px">Annotate</div>
<!-- remote control -->
<svg class="zi" style="left:1229px;top:8px" width="16" height="22" viewBox="0 0 16 22"><rect x="1" y="1" width="14" height="20" rx="7" fill="#bdbdbd"/><rect x="7" y="4.5" width="2" height="5" rx="1" fill="#222224"/></svg>
<div class="zl" style="left:1237px">Remote control</div>
<!-- apps -->
<svg class="zi" style="left:1328px;top:10px" width="19" height="19" viewBox="0 0 19 19"><path d="M1.5 7 V4.5 A3 3 0 0 1 4.5 1.5 H9.5" fill="none" stroke="#bdbdbd" stroke-width="1.6"/><path d="M17.5 11 V14.5 A3 3 0 0 1 14.5 17.5 H9.5" fill="none" stroke="#bdbdbd" stroke-width="1.6"/><circle cx="14.8" cy="4.2" r="2.4" fill="none" stroke="#bdbdbd" stroke-width="1.5"/><circle cx="4.2" cy="14.8" r="2.4" fill="none" stroke="#bdbdbd" stroke-width="1.5"/></svg>
<div class="zl" style="left:1338px">Apps</div>
<!-- more -->
<svg class="zi" style="left:1402px;top:16px" width="22" height="6" viewBox="0 0 22 6"><circle cx="3" cy="3" r="2.3" fill="#bdbdbd"/><circle cx="11" cy="3" r="2.3" fill="#bdbdbd"/><circle cx="19" cy="3" r="2.3" fill="#bdbdbd"/></svg>
<div class="zl" style="left:1413px">More</div>
<!-- sharing bar -->
<div class="a" style="left:766px;top:52px;width:267px;height:23px;background:#26d35c;border-radius:0 0 0 5px"></div>
<svg class="a" style="left:778px;top:57px" width="12" height="12" viewBox="0 0 12 12"><path d="M11 1 C7 1.5 5 3.5 4.5 6.5 L2.5 5.5 L2.5 11 L8 10 L6 8.5 C6.5 5.5 8.5 3 11 1Z" fill="#0d3a17"/></svg>
<div class="a nw" style="left:822px;top:57px;font-size:12px;color:#0f3418;-webkit-text-stroke:0.3px #0f3418">You are screen sharing</div>
<svg class="a" style="left:984px;top:56px" width="14" height="14" viewBox="0 0 14 14"><rect x="5" y="1.5" width="4" height="7" rx="2" fill="#0d3a17"/><path d="M3 7 A4 4 0 0 0 11 7 M7 11 V13" fill="none" stroke="#0d3a17" stroke-width="1.2"/><path d="M2 13 L12 1" stroke="#0d3a17" stroke-width="1.2"/></svg>
<svg class="a" style="left:1010px;top:56px" width="12" height="14" viewBox="0 0 12 14"><path d="M6 1 L11 3 V7 C11 10 9 12 6 13 C3 12 1 10 1 7 V3Z" fill="#0d3a17"/><circle cx="6" cy="7" r="2" fill="#26d35c"/></svg>
<div class="a" style="left:1033px;top:52px;width:95px;height:23px;background:#e02a2a;border-radius:0 0 5px 0"></div>
<div class="a" style="left:1041px;top:57px;width:8px;height:9px;background:#e6f6ff;border-radius:1px"></div>
<div class="a nw" style="left:1055px;top:57px;font-size:11.2px;font-weight:bold;color:#fff">Stop share</div>


<!-- ============ VIDEO ============ -->
<div class="a" style="left:1668px;top:137px;width:230px;height:150px;background:#141414;border-radius:5px 5px 0 0"></div>
<svg class="a" style="left:1671px;top:140px" width="224" height="126" viewBox="0 0 224 126">
<defs><radialGradient id="vface" cx="0.5" cy="0.45" r="0.6"><stop offset="0" stop-color="#ecc8b0"/><stop offset="0.7" stop-color="#dcae94"/><stop offset="1" stop-color="#c89a80"/></radialGradient>
<linearGradient id="vhair" x1="0" y1="0" x2="0" y2="1"><stop offset="0" stop-color="#d4c29a"/><stop offset="1" stop-color="#b8a27a"/></linearGradient></defs>
<rect width="224" height="126" fill="#f3f7f5"/>
<rect x="0" y="0" width="224" height="90" fill="#f6f9f7"/>
<rect x="83" y="0" width="1" height="93" fill="#dfe6e1"/>
<rect x="0" y="93" width="224" height="4" fill="#e0ece2"/>
<rect x="0" y="96" width="224" height="10" fill="#cfe4d3"/>
<rect x="0" y="106" width="224" height="20" fill="#d9e8db"/>
<rect x="219" y="2" width="3" height="12" fill="#9aa49c"/>
<path d="M97 126 C99 102 112 90 138 85 L172 85 C198 90 214 98 224 112 L224 126 Z" fill="#1d1d1d"/>
<rect x="135" y="72" width="38" height="20" rx="6" fill="#202020"/>
<ellipse cx="153.5" cy="46" rx="29" ry="27" fill="#c4b088"/><ellipse cx="153.5" cy="58" rx="22" ry="20" fill="url(#vface)"/>
<path d="M146 53 h6 M158 52 h7" stroke="#9a7060" stroke-width="1.5"/>
<path d="M150 72 h9" stroke="#b07c6c" stroke-width="1.2"/>
<path d="M124 50 C119 30 133 17 155 17 C176 17 188 30 183 48 C181 55 178 58 176 62 L174 46 C166 41 150 40 134 44 C132 52 134 60 131 67 C127 62 125 57 124 50 Z" fill="url(#vhair)"/>
<rect x="0" y="107" width="224" height="19" fill="rgba(28,28,28,0.68)"/>
</svg>
<svg class="a" style="left:1676px;top:249px" width="15" height="15" viewBox="0 0 15 15"><rect x="6" y="1" width="4.5" height="8" rx="2.2" fill="#d04040"/><path d="M4 7 A4 4 0 0 0 12.5 7 M8 11.5 V14" fill="none" stroke="#d04040" stroke-width="1.2"/><path d="M1.5 14.5 L13.5 1" stroke="#ff5050" stroke-width="1.5"/></svg>
<div class="a nw" style="left:1693px;top:249px;font-size:12.7px;color:#f4f4f4">Тетяна Миколаївна Лугова, каф...</div>
<div class="a" style="left:1671px;top:268px;width:224px;height:19px;overflow:hidden;background:linear-gradient(90deg,#8a8880,#a8a69e 20%,#b0aea6 50%,#9c9a92)">
  <div class="a" style="left:46px;top:3px;width:90px;height:40px;border-radius:50%;background:#4a2420"></div>
  <div class="a" style="left:10px;top:0;width:3px;height:19px;background:#6a6860"></div>
</div>

<!-- ============ PARTICIPANTS ============ -->
<div class="a" style="left:1532px;top:284px;width:386px;height:752px;background:#fff;border:1px solid #8e8e8e"></div>
<div class="a" style="left:1541px;top:291px;width:16px;height:16px;border-radius:50%;background:linear-gradient(180deg,#2a8cff,#0b5cff);color:#fff;font-size:8px;font-weight:bold;text-align:center;line-height:16px;letter-spacing:-0.3px">zm</div>
<div class="a nw" style="left:1562px;top:292px;font-size:11.6px;color:#7c7c7c">Participants (35)</div>
<div class="a" style="left:1798px;top:298px;width:11px;height:1px;background:#666"></div>
<div class="a" style="left:1843px;top:294px;width:10px;height:10px;border:1px solid #666"></div>
<svg class="a" style="left:1888px;top:293px" width="12" height="12" viewBox="0 0 12 12"><path d="M1 1 L11 11 M11 1 L1 11" stroke="#666" stroke-width="1"/></svg>
<div class="a" style="left:1551px;top:325px;width:350px;height:32px;border:1px solid #bdbdc4;border-radius:7px;background:#fff"></div>
<svg class="a" style="left:1562px;top:333px" width="14" height="14" viewBox="0 0 14 14"><circle cx="6" cy="6" r="4.8" fill="none" stroke="#6a6a6a" stroke-width="1.2"/><path d="M9.5 9.5 L13 13" stroke="#6a6a6a" stroke-width="1.3"/></svg>
<div class="a nw" style="left:1579px;top:332px;font-size:13px;color:#7a7a7a">Find a participant</div>
<div class="a nw" style="left:1552px;top:371px;font-size:13px;font-weight:bold;color:#232333">Joined (35)</div>
<svg class="a" style="left:1631px;top:375px" width="11" height="7" viewBox="0 0 11 7"><path d="M1 1 L5.5 5.5 L10 1" fill="none" stroke="#555" stroke-width="1.2"/></svg>
<div class="a" style="left:1907px;top:359px;width:8px;height:622px;border-radius:4px;background:#f1f1f4"></div>
<div class="a" style="left:1907px;top:359px;width:8px;height:244px;border-radius:4px;background:#a9a9b0"></div>
<div class="a" style="left:1829px;top:413px;width:16px;height:12px;border-radius:2px;background:#1aa33c"></div>
<svg class="a" style="left:1833px;top:414px" width="8" height="10" viewBox="0 0 8 10"><path d="M4 9 V2 M1 4.5 L4 1.5 L7 4.5" fill="none" stroke="#fff" stroke-width="1.6"/></svg>
<div class="a" style="left:1533px;top:381px;width:372px;height:600px;overflow:hidden">
<div class="a" style="left:-1533px;top:-381px;width:1920px;height:1040px">
<div class="a" style="left:1555px;top:406px;width:26px;height:26px;border-radius:7px;background:linear-gradient(172deg,#0e0c30 0,#1c1650 35%,#5a48b0 52%,#2a2070 62%,#120e3a 100%);color:#fff;font-weight:bold;font-size:13.5px;text-align:center;line-height:26px;font-weight:bold"></div>
<div class="a nw" style="left:1593px;top:412px;font-size:13px;color:#242430">Michael Tuziuk (Host, me)</div>
<svg class="a" style="left:1852px;top:411px" width="17" height="17" viewBox="0 0 17 17"><rect x="7" y="1.5" width="5" height="8.5" rx="2.5" fill="none" stroke="#e0484c" stroke-width="1.3"/><path d="M4.5 7.5 A5 5 0 0 0 14.5 7.5 M9.5 12.5 V15 M7 15.3 H12" fill="none" stroke="#e0484c" stroke-width="1.3"/><path d="M1.5 16 L15.5 1" stroke="#e0484c" stroke-width="1.4"/></svg>
<svg class="a" style="left:1876px;top:412px" width="18" height="15" viewBox="0 0 18 15"><rect x="1" y="3" width="12" height="10" rx="1.5" fill="none" stroke="#e0484c" stroke-width="1.3"/><path d="M13 6.5 L17 4 V12 L13 9.5" fill="none" stroke="#e0484c" stroke-width="1.3"/><path d="M1 15 L16 0.5" stroke="#e0484c" stroke-width="1.4"/></svg>
<div class="a" style="left:1555px;top:447px;width:26px;height:26px;border-radius:7px;background:#070707;color:#fff;font-weight:bold;font-size:13.5px;text-align:center;line-height:26px;font-weight:bold"></div>
<div class="a nw" style="left:1593px;top:453px;font-size:13px;color:#242430">Alina Kurilenko</div>
<svg class="a" style="left:1852px;top:452px" width="17" height="17" viewBox="0 0 17 17"><rect x="7" y="1.5" width="5" height="8.5" rx="2.5" fill="none" stroke="#e0484c" stroke-width="1.3"/><path d="M4.5 7.5 A5 5 0 0 0 14.5 7.5 M9.5 12.5 V15 M7 15.3 H12" fill="none" stroke="#e0484c" stroke-width="1.3"/><path d="M1.5 16 L15.5 1" stroke="#e0484c" stroke-width="1.4"/></svg>
<svg class="a" style="left:1876px;top:453px" width="18" height="15" viewBox="0 0 18 15"><rect x="1" y="3" width="12" height="10" rx="1.5" fill="none" stroke="#e0484c" stroke-width="1.3"/><path d="M13 6.5 L17 4 V12 L13 9.5" fill="none" stroke="#e0484c" stroke-width="1.3"/><path d="M1 15 L16 0.5" stroke="#e0484c" stroke-width="1.4"/></svg>
<div class="a" style="left:1555px;top:488px;width:26px;height:26px;border-radius:7px;background:#3a84c6;color:#fff;font-weight:bold;font-size:13.5px;text-align:center;line-height:26px;font-weight:bold">ІД</div>
<div class="a nw" style="left:1593px;top:494px;font-size:13px;color:#242430">iPhone Денис</div>
<svg class="a" style="left:1852px;top:493px" width="17" height="17" viewBox="0 0 17 17"><rect x="7" y="1.5" width="5" height="8.5" rx="2.5" fill="none" stroke="#e0484c" stroke-width="1.3"/><path d="M4.5 7.5 A5 5 0 0 0 14.5 7.5 M9.5 12.5 V15 M7 15.3 H12" fill="none" stroke="#e0484c" stroke-width="1.3"/><path d="M1.5 16 L15.5 1" stroke="#e0484c" stroke-width="1.4"/></svg>
<svg class="a" style="left:1876px;top:494px" width="18" height="15" viewBox="0 0 18 15"><rect x="1" y="3" width="12" height="10" rx="1.5" fill="none" stroke="#e0484c" stroke-width="1.3"/><path d="M13 6.5 L17 4 V12 L13 9.5" fill="none" stroke="#e0484c" stroke-width="1.3"/><path d="M1 15 L16 0.5" stroke="#e0484c" stroke-width="1.4"/></svg>
<div class="a" style="left:1555px;top:529px;width:26px;height:26px;border-radius:7px;background:#d6541c;color:#fff;font-weight:bold;font-size:13.5px;text-align:center;line-height:26px;font-weight:bold">IK</div>
<div class="a nw" style="left:1593px;top:535px;font-size:13px;color:#242430">Ivan Khodakivsky</div>
<svg class="a" style="left:1852px;top:534px" width="17" height="17" viewBox="0 0 17 17"><rect x="7" y="1.5" width="5" height="8.5" rx="2.5" fill="none" stroke="#e0484c" stroke-width="1.3"/><path d="M4.5 7.5 A5 5 0 0 0 14.5 7.5 M9.5 12.5 V15 M7 15.3 H12" fill="none" stroke="#e0484c" stroke-width="1.3"/><path d="M1.5 16 L15.5 1" stroke="#e0484c" stroke-width="1.4"/></svg>
<svg class="a" style="left:1876px;top:535px" width="18" height="15" viewBox="0 0 18 15"><rect x="1" y="3" width="12" height="10" rx="1.5" fill="none" stroke="#e0484c" stroke-width="1.3"/><path d="M13 6.5 L17 4 V12 L13 9.5" fill="none" stroke="#e0484c" stroke-width="1.3"/><path d="M1 15 L16 0.5" stroke="#e0484c" stroke-width="1.4"/></svg>
<div class="a" style="left:1555px;top:570px;width:26px;height:26px;border-radius:7px;background:#24a862;color:#fff;font-weight:bold;font-size:13.5px;text-align:center;line-height:26px;font-weight:bold">JT</div>
<div class="a nw" style="left:1593px;top:576px;font-size:13px;color:#242430">Jane Tarasevic</div>
<svg class="a" style="left:1852px;top:575px" width="17" height="17" viewBox="0 0 17 17"><rect x="7" y="1.5" width="5" height="8.5" rx="2.5" fill="none" stroke="#e0484c" stroke-width="1.3"/><path d="M4.5 7.5 A5 5 0 0 0 14.5 7.5 M9.5 12.5 V15 M7 15.3 H12" fill="none" stroke="#e0484c" stroke-width="1.3"/><path d="M1.5 16 L15.5 1" stroke="#e0484c" stroke-width="1.4"/></svg>
<svg class="a" style="left:1876px;top:576px" width="18" height="15" viewBox="0 0 18 15"><rect x="1" y="3" width="12" height="10" rx="1.5" fill="none" stroke="#e0484c" stroke-width="1.3"/><path d="M13 6.5 L17 4 V12 L13 9.5" fill="none" stroke="#e0484c" stroke-width="1.3"/><path d="M1 15 L16 0.5" stroke="#e0484c" stroke-width="1.4"/></svg>
<div class="a" style="left:1555px;top:611px;width:26px;height:26px;border-radius:7px;background:#465866;color:#fff;font-weight:bold;font-size:15px;text-align:center;line-height:26px;font-weight:normal">I</div>
<div class="a nw" style="left:1593px;top:617px;font-size:13px;color:#242430">Lena Turitsina</div>
<svg class="a" style="left:1852px;top:616px" width="17" height="17" viewBox="0 0 17 17"><rect x="7" y="1.5" width="5" height="8.5" rx="2.5" fill="none" stroke="#e0484c" stroke-width="1.3"/><path d="M4.5 7.5 A5 5 0 0 0 14.5 7.5 M9.5 12.5 V15 M7 15.3 H12" fill="none" stroke="#e0484c" stroke-width="1.3"/><path d="M1.5 16 L15.5 1" stroke="#e0484c" stroke-width="1.4"/></svg>
<svg class="a" style="left:1876px;top:617px" width="18" height="15" viewBox="0 0 18 15"><rect x="1" y="3" width="12" height="10" rx="1.5" fill="none" stroke="#707070" stroke-width="1.3"/><path d="M13 6.5 L17 4 V12 L13 9.5" fill="none" stroke="#707070" stroke-width="1.3"/></svg>
<div class="a" style="left:1555px;top:652px;width:26px;height:26px;border-radius:7px;background:#c9392e;color:#fff;font-weight:bold;font-size:13.5px;text-align:center;line-height:26px;font-weight:bold">MS</div>
<div class="a nw" style="left:1593px;top:658px;font-size:13px;color:#242430">Maria Savchuk</div>
<svg class="a" style="left:1852px;top:657px" width="17" height="17" viewBox="0 0 17 17"><rect x="7" y="1.5" width="5" height="8.5" rx="2.5" fill="none" stroke="#e0484c" stroke-width="1.3"/><path d="M4.5 7.5 A5 5 0 0 0 14.5 7.5 M9.5 12.5 V15 M7 15.3 H12" fill="none" stroke="#e0484c" stroke-width="1.3"/><path d="M1.5 16 L15.5 1" stroke="#e0484c" stroke-width="1.4"/></svg>
<svg class="a" style="left:1876px;top:658px" width="18" height="15" viewBox="0 0 18 15"><rect x="1" y="3" width="12" height="10" rx="1.5" fill="none" stroke="#e0484c" stroke-width="1.3"/><path d="M13 6.5 L17 4 V12 L13 9.5" fill="none" stroke="#e0484c" stroke-width="1.3"/><path d="M1 15 L16 0.5" stroke="#e0484c" stroke-width="1.4"/></svg>
<div class="a" style="left:1555px;top:693px;width:26px;height:26px;border-radius:7px;background:#df600c;color:#fff;font-weight:bold;font-size:13.5px;text-align:center;line-height:26px;font-weight:bold">OL</div>
<div class="a nw" style="left:1593px;top:699px;font-size:13px;color:#242430">Olexandr Lonskyi</div>
<svg class="a" style="left:1852px;top:698px" width="17" height="17" viewBox="0 0 17 17"><rect x="7" y="1.5" width="5" height="8.5" rx="2.5" fill="none" stroke="#e0484c" stroke-width="1.3"/><path d="M4.5 7.5 A5 5 0 0 0 14.5 7.5 M9.5 12.5 V15 M7 15.3 H12" fill="none" stroke="#e0484c" stroke-width="1.3"/><path d="M1.5 16 L15.5 1" stroke="#e0484c" stroke-width="1.4"/></svg>
<svg class="a" style="left:1876px;top:699px" width="18" height="15" viewBox="0 0 18 15"><rect x="1" y="3" width="12" height="10" rx="1.5" fill="none" stroke="#e0484c" stroke-width="1.3"/><path d="M13 6.5 L17 4 V12 L13 9.5" fill="none" stroke="#e0484c" stroke-width="1.3"/><path d="M1 15 L16 0.5" stroke="#e0484c" stroke-width="1.4"/></svg>
<div class="a" style="left:1555px;top:734px;width:26px;height:26px;border-radius:7px;background:#c71d68;color:#fff;font-weight:bold;font-size:15px;text-align:center;line-height:26px;font-weight:normal">Y</div>
<div class="a nw" style="left:1593px;top:740px;font-size:13px;color:#242430">Yevgeniy Shpak</div>
<svg class="a" style="left:1852px;top:739px" width="17" height="17" viewBox="0 0 17 17"><rect x="7" y="1.5" width="5" height="8.5" rx="2.5" fill="none" stroke="#e0484c" stroke-width="1.3"/><path d="M4.5 7.5 A5 5 0 0 0 14.5 7.5 M9.5 12.5 V15 M7 15.3 H12" fill="none" stroke="#e0484c" stroke-width="1.3"/><path d="M1.5 16 L15.5 1" stroke="#e0484c" stroke-width="1.4"/></svg>
<svg class="a" style="left:1876px;top:740px" width="18" height="15" viewBox="0 0 18 15"><rect x="1" y="3" width="12" height="10" rx="1.5" fill="none" stroke="#e0484c" stroke-width="1.3"/><path d="M13 6.5 L17 4 V12 L13 9.5" fill="none" stroke="#e0484c" stroke-width="1.3"/><path d="M1 15 L16 0.5" stroke="#e0484c" stroke-width="1.4"/></svg>
<div class="a" style="left:1555px;top:775px;width:26px;height:26px;border-radius:7px;background:#8a3cb2;color:#fff;font-weight:bold;font-size:15px;text-align:center;line-height:26px;font-weight:bold">Y</div>
<div class="a nw" style="left:1593px;top:781px;font-size:13px;color:#242430">yurs</div>
<svg class="a" style="left:1852px;top:780px" width="17" height="17" viewBox="0 0 17 17"><rect x="7" y="1.5" width="5" height="8.5" rx="2.5" fill="none" stroke="#e0484c" stroke-width="1.3"/><path d="M4.5 7.5 A5 5 0 0 0 14.5 7.5 M9.5 12.5 V15 M7 15.3 H12" fill="none" stroke="#e0484c" stroke-width="1.3"/><path d="M1.5 16 L15.5 1" stroke="#e0484c" stroke-width="1.4"/></svg>
<svg class="a" style="left:1876px;top:781px" width="18" height="15" viewBox="0 0 18 15"><rect x="1" y="3" width="12" height="10" rx="1.5" fill="none" stroke="#e0484c" stroke-width="1.3"/><path d="M13 6.5 L17 4 V12 L13 9.5" fill="none" stroke="#e0484c" stroke-width="1.3"/><path d="M1 15 L16 0.5" stroke="#e0484c" stroke-width="1.4"/></svg>
<div class="a" style="left:1555px;top:816px;width:26px;height:26px;border-radius:7px;background:#0c4a3c;color:#fff;font-weight:bold;font-size:15px;text-align:center;line-height:26px;font-weight:normal">A</div>
<div class="a nw" style="left:1593px;top:822px;font-size:13px;color:#242430">Ангеліна Калиман</div>
<svg class="a" style="left:1852px;top:821px" width="17" height="17" viewBox="0 0 17 17"><rect x="7" y="1.5" width="5" height="8.5" rx="2.5" fill="none" stroke="#e0484c" stroke-width="1.3"/><path d="M4.5 7.5 A5 5 0 0 0 14.5 7.5 M9.5 12.5 V15 M7 15.3 H12" fill="none" stroke="#e0484c" stroke-width="1.3"/><path d="M1.5 16 L15.5 1" stroke="#e0484c" stroke-width="1.4"/></svg>
<svg class="a" style="left:1876px;top:822px" width="18" height="15" viewBox="0 0 18 15"><rect x="1" y="3" width="12" height="10" rx="1.5" fill="none" stroke="#707070" stroke-width="1.3"/><path d="M13 6.5 L17 4 V12 L13 9.5" fill="none" stroke="#707070" stroke-width="1.3"/></svg>
<div class="a" style="left:1555px;top:857px;width:26px;height:26px;border-radius:7px;background:#d6541c;color:#fff;font-weight:bold;font-size:15px;text-align:center;line-height:26px;font-weight:bold">A</div>
<div class="a nw" style="left:1593px;top:863px;font-size:13px;color:#242430">Ангеліна Мартинова</div>
<svg class="a" style="left:1852px;top:862px" width="17" height="17" viewBox="0 0 17 17"><rect x="7" y="1.5" width="5" height="8.5" rx="2.5" fill="none" stroke="#e0484c" stroke-width="1.3"/><path d="M4.5 7.5 A5 5 0 0 0 14.5 7.5 M9.5 12.5 V15 M7 15.3 H12" fill="none" stroke="#e0484c" stroke-width="1.3"/><path d="M1.5 16 L15.5 1" stroke="#e0484c" stroke-width="1.4"/></svg>
<svg class="a" style="left:1876px;top:863px" width="18" height="15" viewBox="0 0 18 15"><rect x="1" y="3" width="12" height="10" rx="1.5" fill="none" stroke="#707070" stroke-width="1.3"/><path d="M13 6.5 L17 4 V12 L13 9.5" fill="none" stroke="#707070" stroke-width="1.3"/></svg>
<div class="a" style="left:1555px;top:898px;width:26px;height:26px;border-radius:7px;background:#24a862;color:#fff;font-weight:bold;font-size:15px;text-align:center;line-height:26px;font-weight:bold">A</div>
<div class="a nw" style="left:1593px;top:904px;font-size:13px;color:#242430">Андрій</div>
<svg class="a" style="left:1852px;top:903px" width="17" height="17" viewBox="0 0 17 17"><rect x="7" y="1.5" width="5" height="8.5" rx="2.5" fill="none" stroke="#e0484c" stroke-width="1.3"/><path d="M4.5 7.5 A5 5 0 0 0 14.5 7.5 M9.5 12.5 V15 M7 15.3 H12" fill="none" stroke="#e0484c" stroke-width="1.3"/><path d="M1.5 16 L15.5 1" stroke="#e0484c" stroke-width="1.4"/></svg>
<svg class="a" style="left:1876px;top:904px" width="18" height="15" viewBox="0 0 18 15"><rect x="1" y="3" width="12" height="10" rx="1.5" fill="none" stroke="#e0484c" stroke-width="1.3"/><path d="M13 6.5 L17 4 V12 L13 9.5" fill="none" stroke="#e0484c" stroke-width="1.3"/><path d="M1 15 L16 0.5" stroke="#e0484c" stroke-width="1.4"/></svg>
<div class="a" style="left:1555px;top:939px;width:26px;height:26px;border-radius:7px;background:radial-gradient(ellipse at 40% 45%,#f0d0b8 0,#e07040 20%,#b02c1c 50%,#5a1810 80%);color:#fff;font-weight:bold;font-size:13.5px;text-align:center;line-height:26px;font-weight:bold"></div>
<div class="a nw" style="left:1593px;top:945px;font-size:13px;color:#242430">Арсеній Винник</div>
<svg class="a" style="left:1852px;top:944px" width="17" height="17" viewBox="0 0 17 17"><rect x="7" y="1.5" width="5" height="8.5" rx="2.5" fill="none" stroke="#e0484c" stroke-width="1.3"/><path d="M4.5 7.5 A5 5 0 0 0 14.5 7.5 M9.5 12.5 V15 M7 15.3 H12" fill="none" stroke="#e0484c" stroke-width="1.3"/><path d="M1.5 16 L15.5 1" stroke="#e0484c" stroke-width="1.4"/></svg>
<svg class="a" style="left:1876px;top:945px" width="18" height="15" viewBox="0 0 18 15"><rect x="1" y="3" width="12" height="10" rx="1.5" fill="none" stroke="#e0484c" stroke-width="1.3"/><path d="M13 6.5 L17 4 V12 L13 9.5" fill="none" stroke="#e0484c" stroke-width="1.3"/><path d="M1 15 L16 0.5" stroke="#e0484c" stroke-width="1.4"/></svg>
<div class="a" style="left:1558px;top:980px;width:18px;height:2px;background:#7a3ca8"></div>
</div></div>
<div class="a" style="left:1592px;top:998px;width:53px;height:23px;border:1px solid #8c8c8c;border-radius:6px"></div>
<div class="a nw" style="left:1603px;top:1002px;font-size:12.5px;color:#222">Invite</div>
<div class="a" style="left:1704px;top:998px;width:71px;height:23px;border:1px solid #8c8c8c;border-radius:6px"></div>
<div class="a nw" style="left:1715px;top:1002px;font-size:13px;color:#222">Mute All</div>
<div class="a" style="left:1834px;top:998px;width:23px;height:23px;border:1px solid #8c8c8c;border-radius:6px"></div>
<svg class="a" style="left:1839px;top:1007px" width="13" height="4" viewBox="0 0 13 4"><circle cx="2" cy="2" r="1.2" fill="#333"/><circle cx="6.5" cy="2" r="1.2" fill="#333"/><circle cx="11" cy="2" r="1.2" fill="#333"/></svg>

</body></html>
